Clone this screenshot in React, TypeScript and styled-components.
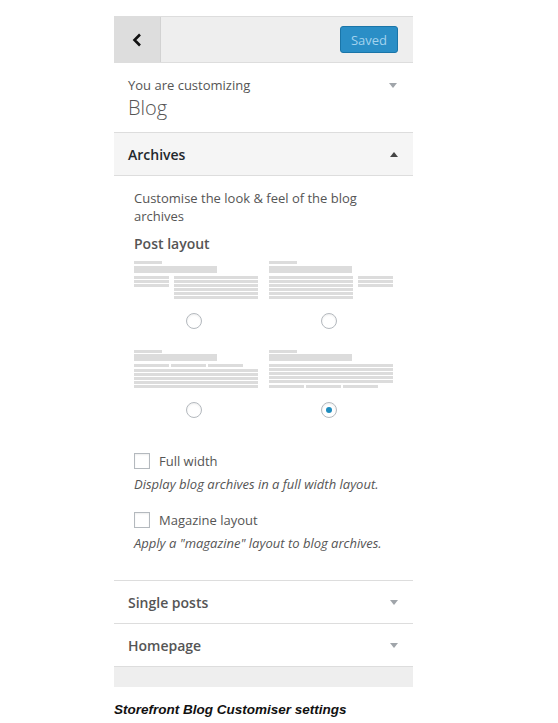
import React from 'react';
import styled, { createGlobalStyle } from 'styled-components';

const GlobalStyle = createGlobalStyle`
  body {
    margin: 0;
    background: #fff;
    font-family: 'Open Sans', 'Noto Sans', sans-serif;
  }
`;

const Page = styled.div`
  padding: 16px 0 0 114px;
`;

const Panel = styled.div`
  width: 299px;
`;

const Header = styled.header`
  display: flex;
  align-items: center;
  height: 45px;
  background: #eee;
  border-top: 1px solid #ddd;
  border-bottom: 1px solid #ddd;
`;

const BackButton = styled.div`
  width: 46px;
  height: 100%;
  background: #ddd;
  border-right: 1px solid #d2d2d2;
  display: flex;
  align-items: center;
  justify-content: center;
`;

const SavedButton = styled.div`
  margin-left: auto;
  margin-right: 15px;
  box-sizing: border-box;
  width: 58px;
  height: 27px;
  border: 1px solid #1a75a8;
  border-radius: 3px;
  background: #2a8ec6;
  color: #a3d3ee;
  font-size: 13px;
  display: flex;
  align-items: center;
  justify-content: center;
`;

const Info = styled.div`
  position: relative;
  padding: 13px 14px 10px;
  border-bottom: 1px solid #ddd;
`;

const InfoLabel = styled.div`
  font-size: 13px;
  line-height: 18px;
  color: #555;
`;

const InfoTitle = styled.div`
  font-size: 20px;
  line-height: 28px;
  font-weight: 300;
  color: #555;
`;

const Triangle = styled.span<{ $up?: boolean; $dark?: boolean }>`
  width: 0;
  height: 0;
  border-left: 4px solid transparent;
  border-right: 4px solid transparent;
  ${(p) =>
    p.$up
      ? `border-bottom: 5px solid ${p.$dark ? '#444' : '#a0a5aa'};`
      : `border-top: 5px solid ${p.$dark ? '#444' : '#a0a5aa'};`}
`;

const InfoArrow = styled.div`
  position: absolute;
  right: 16px;
  top: 20px;
  display: flex;
`;

const SectionTitle = styled.div<{ $open?: boolean }>`
  display: flex;
  align-items: center;
  justify-content: space-between;
  height: 42px;
  padding: 0 15px 0 14px;
  font-size: 14px;
  font-weight: 600;
  color: ${(p) => (p.$open ? '#23282d' : '#555')};
  background: ${(p) => (p.$open ? '#f5f5f5' : '#fff')};
  border-bottom: 1px solid #ddd;
`;

const Content = styled.div`
  padding: 13px 20px 28px;
  border-bottom: 1px solid #ddd;
  color: #555;
`;

const Description = styled.p`
  margin: 0;
  font-size: 13px;
  line-height: 18px;
`;

const FieldTitle = styled.div`
  margin-top: 9px;
  font-size: 14px;
  line-height: 20px;
  font-weight: 600;
`;

const LayoutGrid = styled.div`
  margin-top: 7px;
  display: grid;
  grid-template-columns: 124px 124px;
  column-gap: 11px;
  row-gap: 21px;
`;

const LayoutOption = styled.label`
  display: flex;
  flex-direction: column;
  align-items: center;
`;

const Radio = styled.span<{ $checked?: boolean }>`
  margin-top: 14px;
  margin-right: 4px;
  box-sizing: border-box;
  width: 16px;
  height: 16px;
  border-radius: 50%;
  border: 1px solid #b4b9be;
  background: #fff;
  box-shadow: inset 0 1px 2px rgba(0, 0, 0, 0.07);
  display: flex;
  align-items: center;
  justify-content: center;
  &::after {
    content: '';
    display: ${(p) => (p.$checked ? 'block' : 'none')};
    width: 6px;
    height: 6px;
    border-radius: 50%;
    background: #1e8cbe;
  }
`;

const CheckRow = styled.label<{ $first?: boolean }>`
  display: flex;
  align-items: center;
  margin-top: ${(p) => (p.$first ? '34px' : '18px')};
  font-size: 13px;
  line-height: 18px;
  color: #555;
`;

const Checkbox = styled.span`
  box-sizing: border-box;
  width: 16px;
  height: 16px;
  border: 1px solid #b4b9be;
  background: #fff;
  box-shadow: inset 0 1px 2px rgba(0, 0, 0, 0.07);
  margin-right: 9px;
`;

const Hint = styled.div`
  margin-top: 5px;
  font-size: 13px;
  line-height: 18px;
  font-style: italic;
  color: #555;
`;

const Footer = styled.div`
  height: 20px;
  background: #eee;
`;

const Caption = styled.div`
  margin-top: 15px;
  font-family: 'Liberation Sans', Arial, sans-serif;
  font-size: 13.5px;
  font-weight: bold;
  font-style: italic;
  color: #111;
`;

type Bar = [number, number, number, number];

const BAR = '#dcdcdc';

function stripes(x: number, y: number, w: number, n: number): Bar[] {
  return Array.from({ length: n }, (_, i) => [x, y + i * 4, w, 3] as Bar);
}

const layouts: { bars: Bar[]; checked?: boolean }[] = [
  {
    bars: [[0, 0, 28, 3], [0, 5, 83, 7], ...stripes(0, 15, 35, 3), ...stripes(40, 15, 84, 6)],
  },
  {
    bars: [[0, 0, 28, 3], [0, 5, 83, 7], ...stripes(0, 15, 84, 6), ...stripes(89, 15, 35, 3)],
  },
  {
    bars: [
      [0, 0, 28, 3],
      [0, 4, 83, 7],
      [0, 14, 35, 3],
      [37, 14, 35, 3],
      [74, 14, 35, 3],
      ...stripes(0, 19, 124, 5),
    ],
  },
  {
    bars: [
      [0, 0, 28, 3],
      [0, 4, 83, 7],
      ...stripes(0, 14, 124, 5),
      [0, 35, 35, 3],
      [37, 35, 35, 3],
      [74, 35, 35, 3],
    ],
    checked: true,
  },
];

function LayoutThumb({ bars }: { bars: Bar[] }) {
  return (
    <svg width="124" height="38" viewBox="0 0 124 38">
      {bars.map(([x, y, w, h], i) => (
        <rect key={i} x={x} y={y} width={w} height={h} fill={BAR} />
      ))}
    </svg>
  );
}

function App() {
  return (
    <Page>
      <GlobalStyle />
      <Panel>
        <Header>
          <BackButton>
            <svg width="10" height="14" viewBox="0 0 10 14">
              <path d="M8 1.5 L2.5 7 L8 12.5" stroke="#111" strokeWidth="2.6" fill="none" />
            </svg>
          </BackButton>
          <SavedButton>Saved</SavedButton>
        </Header>

        <Info>
          <InfoLabel>You are customizing</InfoLabel>
          <InfoTitle>Blog</InfoTitle>
          <InfoArrow>
            <Triangle />
          </InfoArrow>
        </Info>

        <SectionTitle $open>
          Archives
          <Triangle $up $dark />
        </SectionTitle>

        <Content>
          <Description>Customise the look &amp; feel of the blog archives</Description>
          <FieldTitle>Post layout</FieldTitle>
          <LayoutGrid>
            {layouts.map((l, i) => (
              <LayoutOption key={i}>
                <LayoutThumb bars={l.bars} />
                <Radio $checked={l.checked} />
              </LayoutOption>
            ))}
          </LayoutGrid>

          <CheckRow $first>
            <Checkbox />
            Full width
          </CheckRow>
          <Hint>Display blog archives in a full width layout.</Hint>

          <CheckRow>
            <Checkbox />
            Magazine layout
          </CheckRow>
          <Hint>Apply a "magazine" layout to blog archives.</Hint>
        </Content>

        <SectionTitle>
          Single posts
          <Triangle />
        </SectionTitle>
        <SectionTitle>
          Homepage
          <Triangle />
        </SectionTitle>
        <Footer />
      </Panel>
      <Caption>Storefront Blog Customiser settings</Caption>
    </Page>
  );
}

export default App;
